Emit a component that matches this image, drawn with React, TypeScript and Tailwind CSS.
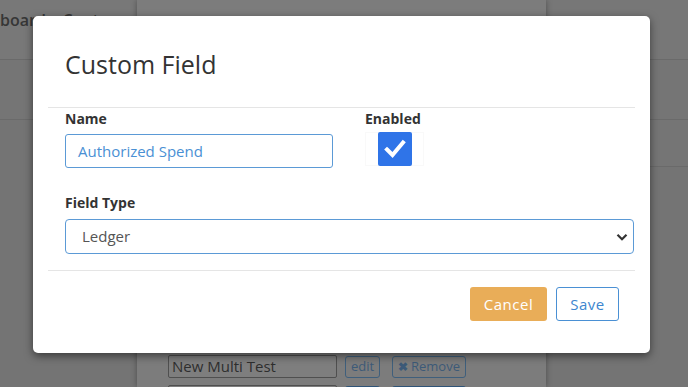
import React from "react";

export default function App() {
  return (
    <div
      className="relative w-[688px] h-[387px] overflow-hidden bg-[#737373]"
      style={{ fontFamily: '"Open Sans", "Noto Sans", sans-serif' }}
    >
      {/* dimmed background page */}
      <div className="flex h-full w-full">
        <div className="flex w-[137px] flex-col">
          <div className="h-[60px] overflow-hidden border-b border-[#6a6a6a] bg-[#787878] pt-[8px]">
            <div className="-ml-[39px] whitespace-nowrap text-[16px] font-semibold text-[#363636]">
              Dashboard&nbsp;&nbsp;&nbsp;&nbsp;Contro
            </div>
          </div>
          <div className="h-[60px] border-b border-[#6a6a6a] bg-[#757575]" />
          <div className="flex-1 bg-[#747474]" />
        </div>
        <div className="relative flex w-[409px] flex-col overflow-hidden bg-[#7c7c7c] pt-[355px] shadow-[0_0_6px_rgba(0,0,0,0.35)]">
          <div className="flex flex-col gap-[7px] pl-[31px]">
            <div className="flex items-center gap-[8px]">
              <div className="flex h-[23px] w-[169px] items-center rounded-[2px] border border-[#4f4f4f] bg-[#7e7e7e] pl-[3px] text-[15px] text-[#2e2e2e]">
                New Multi Test
              </div>
              <div className="flex h-[22px] w-[35px] items-center justify-center rounded-[3px] border border-[#3f5f7c] text-[13px] text-[#3c5a78]">
                edit
              </div>
              <div className="ml-[4px] flex h-[22px] w-[74px] items-center justify-center gap-[3px] rounded-[3px] border border-[#3f5f7c] text-[13px] text-[#3c5a78]">
                <span className="text-[12px] font-bold">✖</span>Remove
              </div>
            </div>
            <div className="flex items-center gap-[8px]">
              <div className="h-[23px] w-[169px] rounded-[2px] border border-[#4f4f4f] bg-[#7e7e7e]" />
              <div className="h-[22px] w-[35px] rounded-[3px] bg-[#2f5478]" />
              <div className="ml-[4px] h-[22px] w-[74px] rounded-[3px] bg-[#2f5478]" />
            </div>
          </div>
        </div>
        <div className="flex flex-1 flex-col">
          <div className="h-[60px] border-b border-[#6a6a6a] bg-[#777777]" />
          <div className="h-[60px] border-b border-[#6a6a6a] bg-[#757575]" />
          <div className="h-[47px] border-b border-[#6a6a6a] bg-[#757575]" />
          <div className="flex-1 bg-[#747474]" />
        </div>
      </div>

      {/* modal */}
      <div className="absolute left-[33px] top-[16px] h-[337px] w-[617px] rounded-[5px] bg-white px-[15px] shadow-[0_3px_9px_rgba(0,0,0,0.5)]">
        <div className="px-[17px] pt-[31px] pb-[25px]">
          <h1 className="text-[25px] leading-[35px] font-normal text-[#333]">Custom Field</h1>
        </div>
        <div className="border-t border-[#e5e5e5]" />
        <div className="px-[17px]">
          <div className="flex">
            <div className="w-[300px]">
              <div className="mt-[1px] text-[14px] leading-[20px] font-bold text-[#333]">Name</div>
              <div className="mt-[5px] flex h-[34px] w-[268px] items-center rounded-[3px] border border-[#5b9ad6] pl-[12px] text-[15px] text-[#4a90d4]">
                Authorized Spend
              </div>
            </div>
            <div>
              <div className="mt-[1px] text-[14px] leading-[20px] font-bold text-[#333]">Enabled</div>
              <div className="mt-[3px] flex h-[34px] w-[59px] items-center justify-center border border-[#f9f9f9]">
                <div className="flex h-[34px] w-[34px] items-center justify-center rounded-[2px] bg-[#2f74e8]">
                  <svg width="24" height="24" viewBox="0 0 24 24" fill="none">
                    <path d="M4 12.5 L9.5 18 L20 5.5" stroke="white" strokeWidth="4" strokeLinecap="square" />
                  </svg>
                </div>
              </div>
            </div>
          </div>
          <div className="mt-[25px] text-[14px] leading-[20px] font-bold text-[#333]">Field Type</div>
          <div className="mt-[6px] flex h-[35px] w-[569px] items-center justify-between rounded-[4px] border border-[#5b9ad6] pl-[16px] pr-[5px] text-[15px] text-[#555]">
            <span>Ledger</span>
            <svg width="12" height="12" viewBox="0 0 12 12" fill="none">
              <path d="M1.5 3.8 L6 8.3 L10.5 3.8" stroke="#333" strokeWidth="2.2" />
            </svg>
          </div>
        </div>
        <div className="mt-[16px] border-t border-[#e5e5e5]" />
        <div className="flex justify-end gap-[9px] pt-[16px] pr-[16px]">
          <button className="h-[34px] w-[77px] rounded-[3px] bg-[#e9ad58] text-[15px] tracking-[0.5px] text-white">
            Cancel
          </button>
          <button className="h-[34px] w-[63px] rounded-[3px] border border-[#4a90d4] bg-white text-[15px] tracking-[0.5px] text-[#3d86cf]">
            Save
          </button>
        </div>
      </div>
    </div>
  );
}
